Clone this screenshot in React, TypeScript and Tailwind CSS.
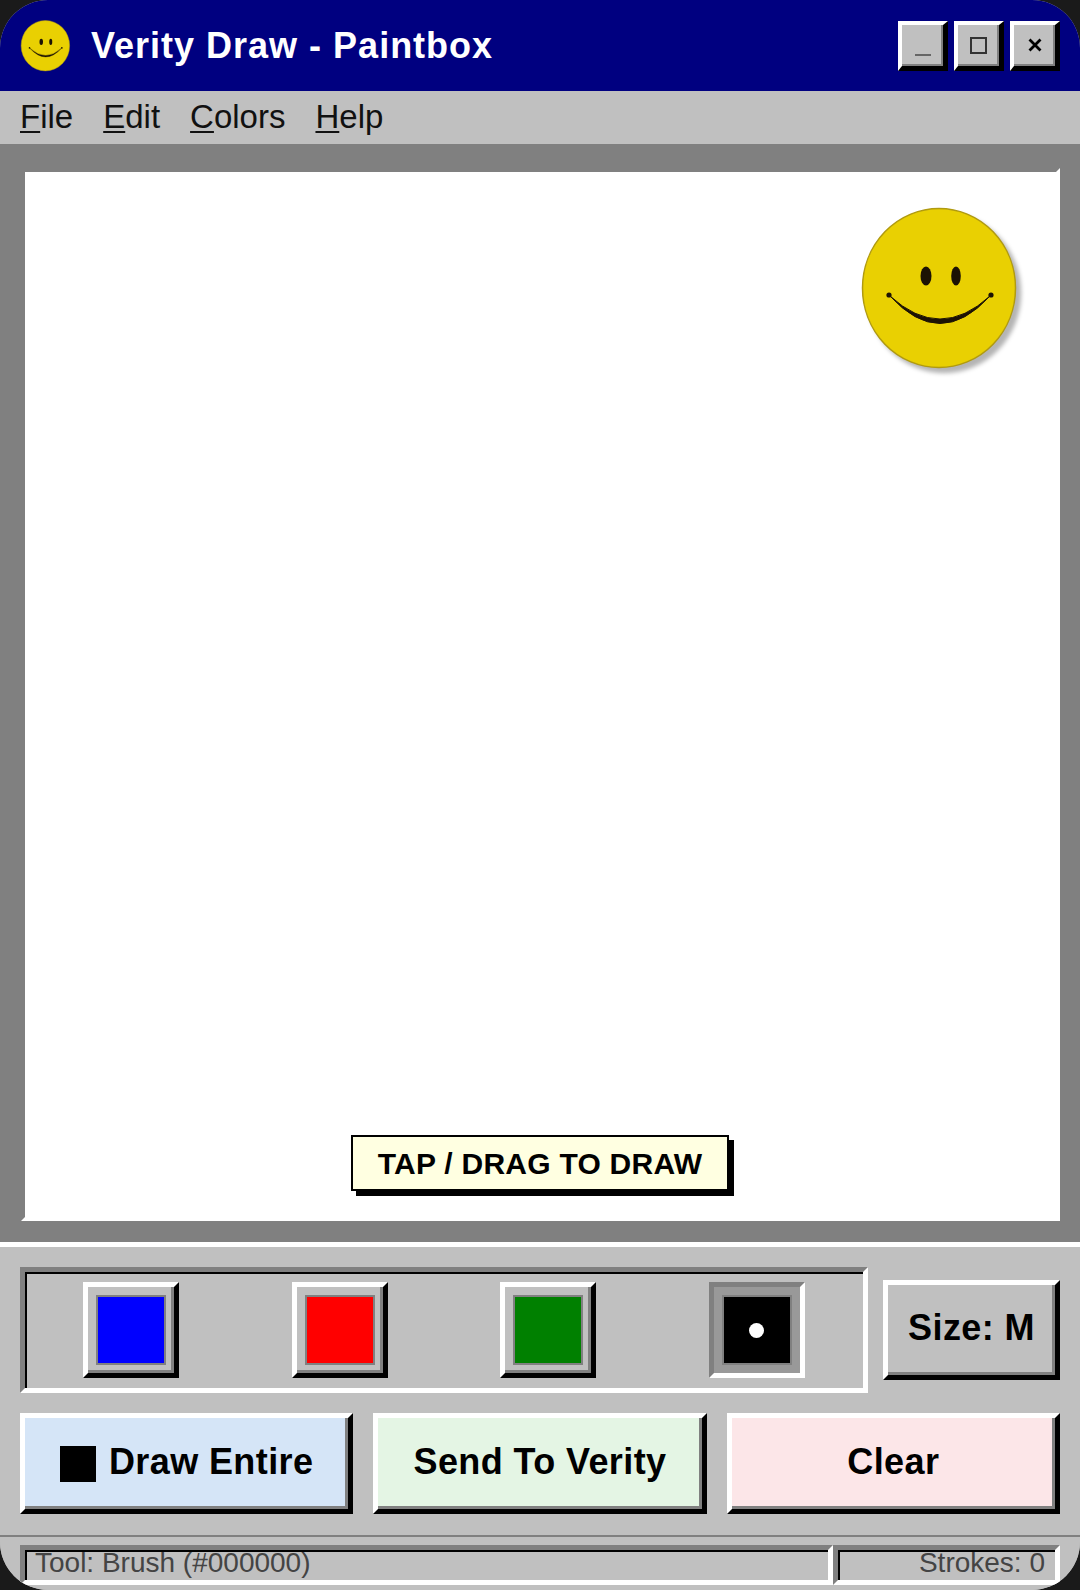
import React from "react";

function Smiley({ className }: { className: string }) {
  return (
    <svg viewBox="0 0 160 164" className={className}>
      <ellipse cx="78" cy="81" rx="76.5" ry="79.5" fill="#e9d002" stroke="#b09a10" strokeWidth="1.5" />
      <ellipse cx="65" cy="69" rx="5.5" ry="9.5" fill="#1c1204" />
      <ellipse cx="95" cy="69" rx="4.8" ry="9.5" fill="#1c1204" />
      <path d="M29 89 Q79 144 129 89 Q79 135 29 89 Z" fill="#1c1204" stroke="#1c1204" strokeWidth="1" strokeLinejoin="round" />
      <circle cx="28" cy="88" r="2.6" fill="#1c1204" />
      <circle cx="130" cy="88" r="2.6" fill="#1c1204" />
    </svg>
  );
}

const raised = "border-[5px] border-t-white border-l-white border-r-black border-b-black shadow-[inset_-3px_-3px_0_#808080]";
const sunken = "border-[5px] border-t-[#808080] border-l-[#808080] border-r-white border-b-white shadow-[inset_2px_2px_0_#000]";

function WinButton({ children }: { children: React.ReactNode }) {
  return (
    <div className="flex h-[50px] w-[50px] items-center justify-center border-[4px] border-r-[5px] border-b-[5px] border-t-white border-l-white border-r-black border-b-black bg-[#c0c0c0] shadow-[inset_-2px_-2px_0_#808080]">
      {children}
    </div>
  );
}

function Swatch({ color }: { color: string }) {
  return (
    <div className={`flex h-24 w-24 items-center justify-center bg-[#c0c0c0] ${raised}`}>
      <div className={`h-[70px] w-[70px] border-2 border-[#808080] ${color}`} />
    </div>
  );
}

function Menu({ first, rest }: { first: string; rest: string }) {
  return (
    <span>
      <span className="underline decoration-2 underline-offset-[3px]">{first}</span>
      {rest}
    </span>
  );
}

function ActionButton({ color, children }: { color: string; children: React.ReactNode }) {
  return (
    <div className={`flex h-[101px] items-center justify-center text-[36px] font-bold tracking-[0.4px] text-black ${color} ${raised}`}>
      {children}
    </div>
  );
}

export default function App() {
  return (
    <div className="h-[1590px] w-[1080px] bg-[#1a1a1a] font-['Liberation_Sans',Arial,sans-serif]">
      <div className="flex h-full flex-col overflow-hidden rounded-[48px] bg-[#c0c0c0]">
        <header className="flex h-[91px] items-center bg-[#000080] pl-5 pr-5">
          <Smiley className="h-[52px] w-[52px]" />
          <h1 className="ml-[19px] text-[36px] font-bold tracking-[1px] text-white">Verity Draw - Paintbox</h1>
          <div className="ml-auto flex gap-[6px]">
            <WinButton>
              <span className="mt-[20px] block h-[2px] w-4 bg-[#666]" />
            </WinButton>
            <WinButton>
              <span className="block h-[17px] w-[17px] border-2 border-[#333]" />
            </WinButton>
            <WinButton>
              <svg viewBox="0 0 14 14" className="h-[14px] w-[14px]">
                <path d="M1.5 1.5 L12.5 12.5 M12.5 1.5 L1.5 12.5" stroke="#000" strokeWidth="2.8" />
              </svg>
            </WinButton>
          </div>
        </header>

        <nav className="flex h-[53px] items-center gap-[30px] bg-[#c0c0c0] pb-[2px] pl-5 text-[33px] leading-none text-[#111]">
          <Menu first="F" rest="ile" />
          <Menu first="E" rest="dit" />
          <Menu first="C" rest="olors" />
          <Menu first="H" rest="elp" />
        </nav>

        <main className="flex h-[1098px] flex-col bg-[#808080] pb-[21px] pl-[21px] pr-5 pt-6">
          <div className="relative flex-1 border-4 border-t-[#808080] border-l-[#808080] border-r-white border-b-white bg-white">
            <Smiley className="absolute left-[836px] top-[35px] h-[164px] w-[160px] drop-shadow-[5px_5px_2px_#b4b4b4]" />
            <div className="absolute bottom-[26px] left-[326px] flex h-[56px] w-[378px] items-center justify-center border-2 border-black bg-[#ffffe1] text-[30px] font-bold tracking-[0.25px] text-black shadow-[5px_5px_0_#000]">
              TAP / DRAG TO DRAW
            </div>
          </div>
        </main>

        <section className="flex flex-col gap-5 border-t-[5px] border-white bg-[#c0c0c0] px-5 pt-5 pb-[21px]">
          <div className="flex items-center gap-[15px]">
            <div className={`flex h-[126px] w-[848px] items-center justify-around px-[2px] ${sunken}`}>
              <Swatch color="bg-[#0000ff]" />
              <Swatch color="bg-[#ff0000]" />
              <Swatch color="bg-[#008000]" />
              <div className="flex h-24 w-24 items-center justify-center border-[5px] border-t-[#808080] border-l-[#808080] border-r-white border-b-white bg-[#999999]">
                <div className="flex h-[70px] w-[70px] items-center justify-center border-2 border-[#808080] bg-black">
                  <div className="h-[15px] w-[15px] rounded-full bg-white" />
                </div>
              </div>
            </div>
            <div className={`flex h-[100px] flex-1 items-center justify-center bg-[#c0c0c0] text-[36px] font-bold tracking-[0.4px] text-black ${raised}`}>
              <span className="pb-1">Size: M</span>
            </div>
          </div>
          <div className="grid grid-cols-3 gap-5">
            <ActionButton color="bg-[#d5e5f7]">
              <span className="mr-[13px] block h-9 w-9 bg-black" />
              <span className="pb-1">Draw Entire</span>
            </ActionButton>
            <ActionButton color="bg-[#e4f5e4]">
              <span className="pb-1">Send To Verity</span>
            </ActionButton>
            <ActionButton color="bg-[#fce6e8]">
              <span className="pb-1">Clear</span>
            </ActionButton>
          </div>
        </section>

        <footer className="flex flex-1 items-start border-t-2 border-[#808080] bg-[#c0c0c0] px-5 pt-2 text-[28px] leading-[34px] text-[#444]">
          <div className={`h-10 w-[813px] pl-[10px] ${sunken}`}>
            <span className="block -translate-y-1">Tool: Brush (#000000)</span>
          </div>
          <div className={`h-10 flex-1 pr-[10px] text-right ${sunken}`}>
            <span className="block -translate-y-1">Strokes: 0</span>
          </div>
        </footer>
      </div>
    </div>
  );
}
